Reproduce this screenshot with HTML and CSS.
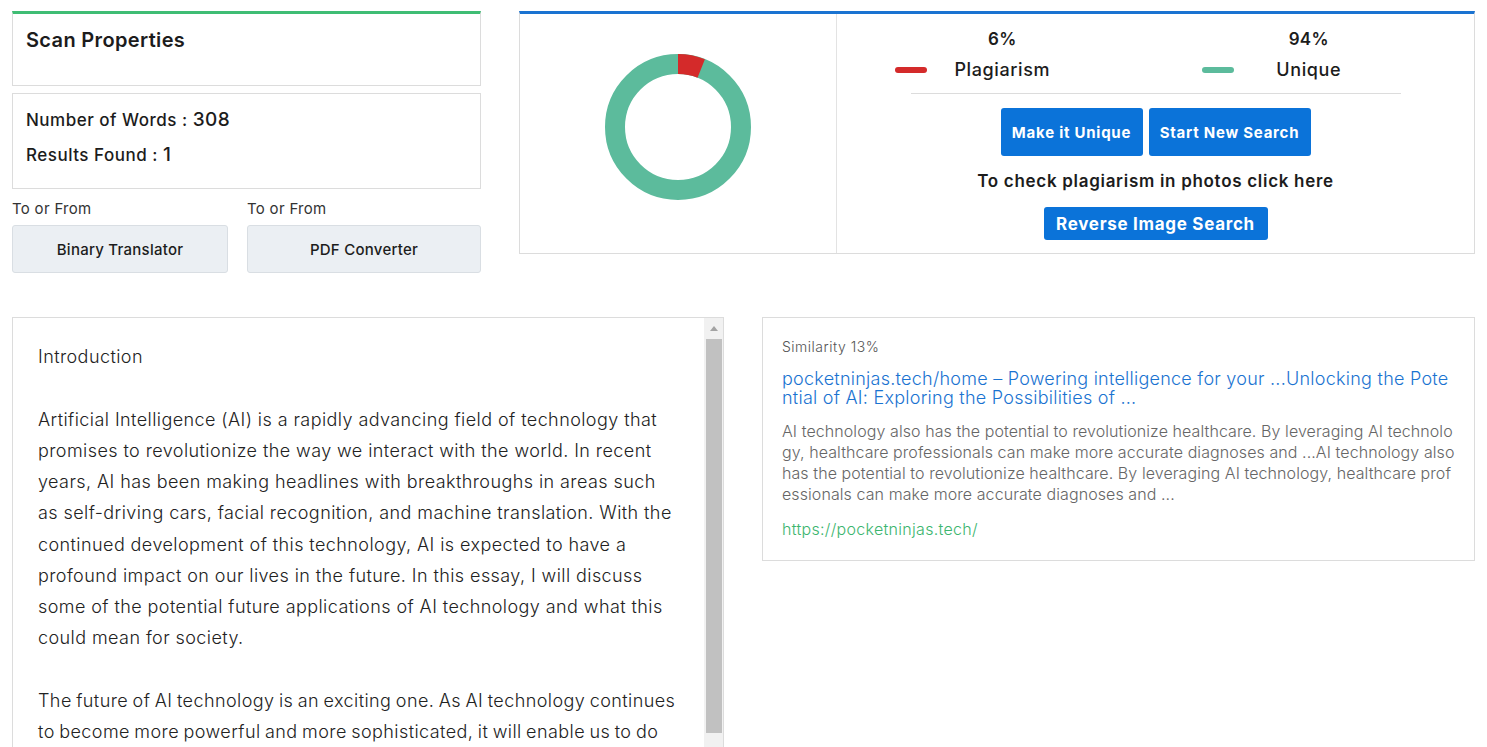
FILE: index.html
```html
<!DOCTYPE html>
<html lang="en">
<head>
<meta charset="utf-8">
<title>Plagiarism Report</title>
<link rel="stylesheet" href="styles.css">
</head>
<body>
<div class="page">
  <div class="top-row">
    <div class="left-col">
      <div class="card card-green">
        <h2 class="card-title">Scan Properties</h2>
      </div>
      <div class="card stats">
        <div class="stat">Number of Words : <span class="num">308</span></div>
        <div class="stat">Results Found : <span class="num">1</span></div>
      </div>
      <div class="tools">
        <div class="tool">
          <div class="tool-label">To or From</div>
          <div class="tool-btn">Binary Translator</div>
        </div>
        <div class="tool">
          <div class="tool-label">To or From</div>
          <div class="tool-btn">PDF Converter</div>
        </div>
      </div>
    </div>
    <div class="card card-blue summary">
      <div class="chart">
        <svg width="160" height="160" viewBox="0 0 160 160">
          <circle cx="80" cy="80" r="63" fill="none" stroke="#5cbb9c" stroke-width="20"/>
          <circle cx="80" cy="80" r="63" fill="none" stroke="#d42a2a" stroke-width="20" stroke-dasharray="23.75 400" transform="rotate(-90 80 80)"/>
        </svg>
      </div>
      <div class="results">
        <div class="legend">
          <div class="legend-item">
            <span class="marker marker-red"></span>
            <div class="pct">6%</div>
            <div class="legend-name">Plagiarism</div>
          </div>
          <div class="legend-item">
            <span class="marker marker-green"></span>
            <div class="pct">94%</div>
            <div class="legend-name">Unique</div>
          </div>
        </div>
        <div class="divider"></div>
        <div class="actions">
          <a class="btn btn-lg btn-unique">Make it Unique</a>
          <a class="btn btn-lg btn-new">Start New Search</a>
        </div>
        <div class="photo-note">To check plagiarism in photos click here</div>
        <a class="btn btn-sm">Reverse Image Search</a>
      </div>
    </div>
  </div>

  <div class="bottom-row">
    <div class="essay">
      <div class="essay-text">
        <p>Introduction</p>
        <p>Artificial Intelligence (AI) is a rapidly advancing field of technology that promises to revolutionize the way we interact with the world. In recent years, AI has been making headlines with breakthroughs in areas such as self-driving cars, facial recognition, and machine translation. With the continued development of this technology, AI is expected to have a profound impact on our lives in the future. In this essay, I will discuss some of the potential future applications of AI technology and what this could mean for society.</p>
        <p class="last">The future of AI technology is an exciting one. As AI technology continues to become more powerful and more sophisticated, it will enable us to do things that were once thought impossible. From healthcare to transportation, AI will change the way we live and work.</p>
      </div>
      <div class="scrollbar">
        <div class="scroll-arrow"><span class="tri"></span></div>
        <div class="scroll-thumb"></div>
      </div>
    </div>
    <div class="card match">
      <div class="similarity">Similarity 13%</div>
      <a class="match-title">pocketninjas.tech/home – Powering intelligence for your ...Unlocking the Potential of AI: Exploring the Possibilities of ...</a>
      <p class="snippet">AI technology also has the potential to revolutionize healthcare. By leveraging AI technology, healthcare professionals can make more accurate diagnoses and ...AI technology also has the potential to revolutionize healthcare. By leveraging AI technology, healthcare professionals can make more accurate diagnoses and ...</p>
      <a class="match-url">https://pocketninjas.tech/</a>
    </div>
  </div>
</div>
</body>
</html>
```

FILE: styles.css
```css
html, body {
  margin: 0;
  padding: 0;
  overflow: hidden;
  background: #fff;
}
body {
  font-family: "Inter", "Noto Sans", sans-serif;
  color: #1c1c1c;
}
.page {
  padding: 11px 12px 0;
}
.top-row {
  display: flex;
  gap: 38px;
  align-items: flex-start;
}
.left-col {
  width: 469px;
  flex: none;
  display: flex;
  flex-direction: column;
}
.card {
  border: 1px solid #dcdcdc;
  background: #fff;
  box-sizing: border-box;
}
.card-green {
  border-top: 3px solid #3fbd74;
  padding: 12px 13px 31px;
}
.card-title {
  margin: 0;
  font-size: 20px;
  line-height: 28px;
  font-weight: 600;
  color: #1c1c1c;
  letter-spacing: 0.35px;
}
.stats {
  margin-top: 7px;
  padding: 13px 13px 20px;
}
.stat {
  font-size: 17px;
  line-height: 26px;
  font-weight: 500;
  color: #1c1c1c;
  letter-spacing: 0.5px;
}
.stat + .stat {
  margin-top: 9px;
}
.num {
  font-size: 19px;
}
.tools {
  display: grid;
  grid-template-columns: 216px 1fr;
  gap: 19px;
  margin-top: 10px;
}
.tool-label {
  font-size: 15px;
  line-height: 20px;
  color: #333;
  margin-bottom: 6px;
  letter-spacing: 0.3px;
}
.tool-btn {
  height: 48px;
  box-sizing: border-box;
  border: 1px solid #d9dee3;
  border-radius: 3px;
  background: #ebeff3;
  display: flex;
  align-items: center;
  justify-content: center;
  font-size: 15px;
  font-weight: 500;
  color: #1c1c1c;
  letter-spacing: 0.25px;
}
.card-blue {
  border-top: 3px solid #1a73d1;
}
.summary {
  flex: 1;
  height: 243px;
  display: flex;
}
.chart {
  width: 317px;
  flex: none;
  border-right: 1px solid #e3e3e3;
  display: flex;
  justify-content: center;
  padding-top: 33px;
  box-sizing: border-box;
}
.results {
  flex: 1;
  padding: 0 12px;
  display: flex;
  flex-direction: column;
  align-items: center;
}
.legend {
  display: flex;
  width: 100%;
  padding-top: 13px;
}
.legend-item {
  flex: 1;
  position: relative;
  text-align: center;
}
.pct {
  font-size: 17px;
  line-height: 24px;
  font-weight: 600;
  letter-spacing: 0.3px;
}
.legend-name {
  font-size: 18px;
  line-height: 28px;
  font-weight: 500;
  margin-top: 5px;
  letter-spacing: 0.6px;
}
.marker {
  position: absolute;
  left: 46px;
  top: 40px;
  width: 32px;
  height: 6px;
  border-radius: 3px;
}
.marker-red { background: #d42a2a; }
.marker-green { background: #5cbb9c; }
.divider {
  width: 490px;
  height: 1px;
  background: #dcdcdc;
  margin-top: 9px;
}
.actions {
  display: flex;
  gap: 6px;
  margin-top: 14px;
}
.btn {
  background: #0b73d9;
  color: #fff;
  font-weight: 700;
  border-radius: 3px;
  display: flex;
  align-items: center;
  justify-content: center;
  text-decoration: none;
  letter-spacing: 0.75px;
}
.btn-lg {
  height: 48px;
  font-size: 15px;
  box-sizing: border-box;
}
.btn-unique { width: 142px; }
.btn-new { width: 162px; }
.photo-note {
  font-size: 17px;
  font-weight: 600;
  line-height: 24px;
  margin-top: 13px;
  letter-spacing: 0.7px;
}
.btn-sm {
  width: 224px;
  height: 33px;
  font-size: 17px;
  margin-top: 14px;
  letter-spacing: 0.7px;
}
.bottom-row {
  display: grid;
  grid-template-columns: 712px 1fr;
  gap: 38px;
  margin-top: 44px;
  align-items: start;
}
.essay {
  border: 1px solid #dcdcdc;
  height: 460px;
  display: flex;
  overflow: hidden;
}
.essay-text {
  flex: 1;
  padding: 23px 26px 0 25px;
  font-size: 18px;
  line-height: 31.25px;
  font-weight: 300;
  letter-spacing: 0.42px;
  color: #222;
  overflow: hidden;
}
.essay-text p {
  margin: 0 0 31.25px;
}
.essay-text p.last {
  word-spacing: -1px;
}
.scrollbar {
  width: 19px;
  flex: none;
  background: #f1f1f1;
  display: flex;
  flex-direction: column;
}
.scroll-arrow {
  height: 21px;
  display: flex;
  align-items: center;
  justify-content: center;
}
.tri {
  width: 0;
  height: 0;
  border-left: 4px solid transparent;
  border-right: 4px solid transparent;
  border-bottom: 5px solid #a3a3a3;
}
.scroll-thumb {
  height: 394px;
  margin: 0 1px 0 2px;
  background: #c1c1c1;
}
.match {
  padding: 19px 19px 21px;
}
.similarity {
  font-size: 14px;
  line-height: 20px;
  color: #555;
  font-weight: 300;
  letter-spacing: 0.5px;
}
.match-title {
  display: block;
  margin-top: 12px;
  font-size: 18px;
  line-height: 19px;
  color: #1a73d1;
  word-break: break-all;
  font-weight: 300;
  letter-spacing: 0.25px;
}
.snippet {
  margin: 14px 0 0;
  font-size: 16px;
  line-height: 21px;
  color: #666;
  word-break: break-all;
  font-weight: 300;
  letter-spacing: 0.08px;
}
.match-url {
  display: block;
  margin-top: 14px;
  font-size: 16px;
  line-height: 20px;
  color: #3cb56e;
  font-weight: 300;
  letter-spacing: 0.3px;
}
```
